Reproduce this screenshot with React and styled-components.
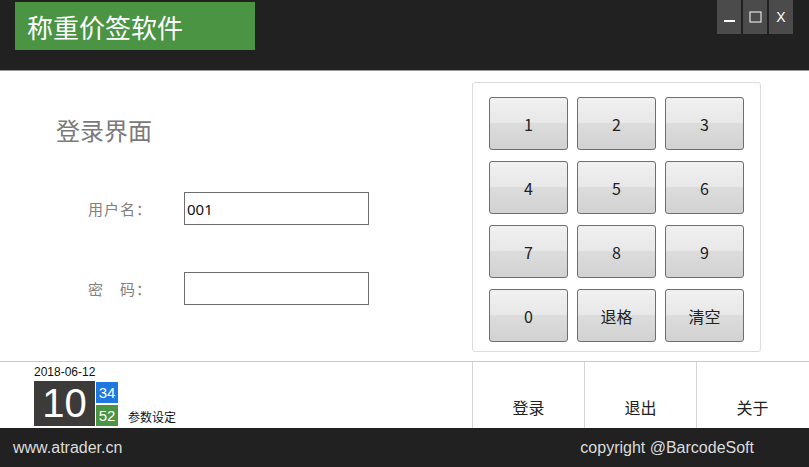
import styled, {createGlobalStyle} from "styled-components";

const Global = createGlobalStyle`
  html, body {
    margin: 0;
    padding: 0;
    background: #ffffff;
  }
  body {
    font-family: "Liberation Sans", Arial, "Noto Sans CJK SC", sans-serif;
  }
`;

const Window = styled.div`
  width: 809px;
  height: 467px;
  display: flex;
  flex-direction: column;
  overflow: hidden;
`;

const Header = styled.div`
  height: 71px;
  flex-shrink: 0;
  background: #212121;
  display: flex;
  justify-content: space-between;
  border-bottom: 1px solid #9a9a9a;
  box-sizing: border-box;
`;

const TitleBox = styled.div`
  margin: 2px 0 0 15px;
  width: 240px;
  height: 48px;
  background: #4a9443;
  color: #ffffff;
  font-size: 26px;
  font-family: "Noto Sans CJK SC", sans-serif;
  display: flex;
  align-items: center;
  padding-left: 12px;
  box-sizing: border-box;
`;

const WinButtons = styled.div`
  display: flex;
  gap: 2px;
  margin-right: 16px;
`;

const WinButton = styled.div`
  width: 24px;
  height: 34px;
  background: #4b4b4b;
  color: #ffffff;
  display: flex;
  align-items: center;
  justify-content: center;
  font-size: 14px;
`;

const Body = styled.div`
  height: 291px;
  flex-shrink: 0;
  display: flex;
  border-bottom: 1px solid #c8c8c8;
  box-sizing: border-box;
`;

const LoginPane = styled.div`
  width: 472px;
  padding: 16px 0 0 56px;
  box-sizing: border-box;
`;

const LoginTitle = styled.div`
  font-family: "Noto Sans CJK SC", sans-serif;
  font-size: 24px;
  color: #7a7a7a;
  margin-top: 25px;
`;

const Field = styled.div`
  display: flex;
  align-items: center;
  margin-top: ${p => p.$top}px;
  padding-left: 32px;
`;

const Label = styled.div`
  width: 96px;
  font-family: "Noto Sans CJK SC", sans-serif;
  font-size: 15px;
  letter-spacing: 1px;
  color: #808080;
`;

const Input = styled.div`
  width: 185px;
  height: 33px;
  border: 1px solid #6e6e6e;
  box-sizing: border-box;
  font-size: 15px;
  padding-left: 2px;
  display: flex;
  align-items: center;
  color: #111;
  font-family: "Noto Sans", sans-serif;
`;

const Keypad = styled.div`
  margin-top: 11px;
  width: 289px;
  height: 270px;
  border: 1px solid #dcdcdc;
  border-radius: 3px;
  box-sizing: border-box;
  padding: 14px 0 0 16px;
  display: grid;
  grid-template-columns: repeat(3, 79px);
  grid-auto-rows: 53px;
  column-gap: 9px;
  row-gap: 11px;
  align-content: start;
`;

const Key = styled.div`
  border: 1px solid #6e6e6e;
  border-radius: 3px;
  background: linear-gradient(#f1f1f1 0%, #e8e8e8 48%, #dcdcdc 50%, #d2d2d2 100%);
  display: flex;
  align-items: center;
  justify-content: center;
  font-size: 16px;
  color: #222;
  font-family: "Noto Sans CJK SC", sans-serif;
`;

const Bottom = styled.div`
  flex: 1;
  display: flex;
`;

const Clock = styled.div`
  width: 472px;
  padding: 4px 0 0 34px;
  box-sizing: border-box;
`;

const DateText = styled.div`
  font-size: 12px;
  color: #111;
  line-height: 13px;
`;

const ClockRow = styled.div`
  display: flex;
  align-items: flex-end;
  margin-top: 2px;
`;

const Hour = styled.div`
  width: 61px;
  height: 45px;
  background: #3d3b3a;
  color: #ffffff;
  font-size: 40px;
  line-height: 45px;
  text-align: center;
  font-family: "Liberation Sans", sans-serif;
`;

const Mins = styled.div`
  display: flex;
  flex-direction: column;
  gap: 2px;
  margin-left: 1px;
`;

const Digit = styled.div`
  width: 22px;
  height: 21px;
  background: ${p => p.$bg};
  color: #ffffff;
  font-size: 15px;
  display: flex;
  align-items: center;
  justify-content: center;
`;

const Settings = styled.div`
  margin-left: 10px;
  font-family: "Noto Sans CJK SC", sans-serif;
  font-size: 12px;
  color: #111;
  line-height: 18px;
`;

const Action = styled.div`
  width: 112px;
  border-left: 1px solid #d6d6d6;
  display: flex;
  align-items: flex-end;
  justify-content: center;
  padding-bottom: 9px;
  box-sizing: border-box;
  font-family: "Noto Sans CJK SC", sans-serif;
  font-size: 16px;
  color: #222;
`;

const Footer = styled.div`
  height: 39px;
  flex-shrink: 0;
  background: #212121;
  color: #dcdcdc;
  display: flex;
  align-items: center;
  justify-content: space-between;
  padding: 0 55px 0 13px;
  font-size: 16px;
`;

const keys = ["1", "2", "3", "4", "5", "6", "7", "8", "9", "0", "退格", "清空"];

export default function App() {
  return (
    <Window>
      <Global/>
      <Header>
        <TitleBox>称重价签软件</TitleBox>
        <WinButtons>
          <WinButton>
            <svg width="12" height="12" viewBox="0 0 12 12"><rect x="1" y="9" width="11" height="2" fill="#fff"/></svg>
          </WinButton>
          <WinButton>
            <svg width="13" height="12" viewBox="0 0 13 12"><rect x="1" y="1" width="11" height="10" fill="none" stroke="#fff" strokeWidth="1"/></svg>
          </WinButton>
          <WinButton>X</WinButton>
        </WinButtons>
      </Header>
      <Body>
        <LoginPane>
          <LoginTitle>登录界面</LoginTitle>
          <Field $top={45}>
            <Label>用户名：</Label>
            <Input>001</Input>
          </Field>
          <Field $top={47}>
            <Label>密　码：</Label>
            <Input/>
          </Field>
        </LoginPane>
        <Keypad>
          {keys.map(k => <Key key={k}>{k}</Key>)}
        </Keypad>
      </Body>
      <Bottom>
        <Clock>
          <DateText>2018-06-12</DateText>
          <ClockRow>
            <Hour>10</Hour>
            <Mins>
              <Digit $bg="#1e78e0">34</Digit>
              <Digit $bg="#4a9443">52</Digit>
            </Mins>
            <Settings>参数设定</Settings>
          </ClockRow>
        </Clock>
        <Action>登录</Action>
        <Action>退出</Action>
        <Action>关于</Action>
      </Bottom>
      <Footer>
        <span>www.atrader.cn</span>
        <span>copyright @BarcodeSoft</span>
      </Footer>
    </Window>
  );
}
